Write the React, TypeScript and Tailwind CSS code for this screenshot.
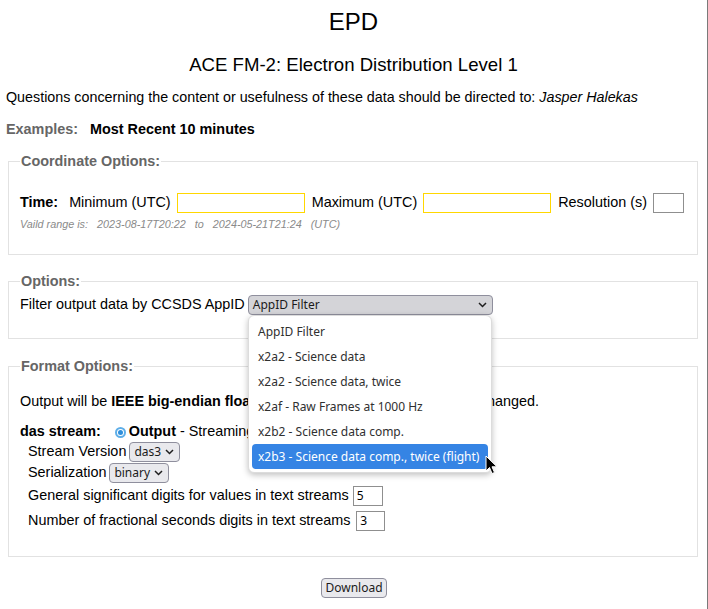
import React from 'react';

const ctl = "font-['Noto_Sans','DejaVu_Sans',sans-serif] text-[12px]";

const Chevron: React.FC = () => (
  <svg width="9" height="6" viewBox="0 0 9 6" className="shrink-0">
    <polyline points="1,1 4.5,4.5 8,1" fill="none" stroke="#1f1f1f" strokeWidth="1.5" />
  </svg>
);

const FakeSelect: React.FC<{ value: string; width: string; pressed?: boolean }> = ({ value, width, pressed }) => (
  <span
    className={`inline-flex h-[20px] items-center justify-between rounded-[4px] border border-[#8f8f9d] pl-[4px] pr-[5px] text-[#1b1b1b] ${ctl} ${width} ${pressed ? 'bg-[#d4d4d8]' : 'bg-[#e9e9ed]'}`}
  >
    <span className="leading-none">{value}</span>
    <Chevron />
  </span>
);

const TextBox: React.FC<{ width: string; value?: string; yellow?: boolean }> = ({ width, value, yellow }) => (
  <span
    className={`inline-flex h-[20px] items-center border pl-[3px] text-black ${ctl} ${width} ${yellow ? 'border-[#ffd700]' : 'border-[#8f8f8f]'}`}
  >
    {value}
  </span>
);

const Legend: React.FC<{ children: React.ReactNode }> = ({ children }) => (
  <legend className="px-[1px] leading-[18px] font-bold text-[#666666]">{children}</legend>
);

const appIds = [
  'AppID Filter',
  'x2a2 - Science data',
  'x2a2 - Science data, twice',
  'x2af - Raw Frames at 1000 Hz',
  'x2b2 - Science data comp.',
  'x2b3 - Science data comp., twice (flight)',
];

export default function App() {
  return (
    <div className="relative h-[609px] w-[708px] overflow-hidden border-r border-[#7a7a7a] bg-white font-['Liberation_Sans',Arial,sans-serif] text-[14.4px] text-black">
      {/* Headings */}
      <div className="flex h-[44px] items-center justify-center text-[24px]">EPD</div>
      <div className="flex h-[42px] items-center justify-center text-[18.6px]">
        ACE FM-2: Electron Distribution Level 1
      </div>
      <div className="flex h-[24px] items-center pl-[6px] text-[14.3px]">
        Questions concerning the content or usefulness of these data should be directed to:&nbsp;
        <i>Jasper Halekas</i>
      </div>
      <div className="flex h-[40px] items-center pl-[6px] font-bold">
        <span className="text-[#666666]">Examples:</span>
        <span className="ml-[12px]">Most Recent 10 minutes</span>
      </div>

      {/* Coordinate options */}
      <fieldset className="ml-[8px] mt-[2px] w-[690px] border border-[#e2e2e2] pl-[11px] pb-[22px]">
        <Legend>Coordinate Options:</Legend>
        <div className="mt-[23px] flex h-[20px] items-center">
          <span className="font-bold">Time:</span>
          <span className="ml-[11px]">Minimum (UTC)</span>
          <TextBox width="ml-[6px] w-[128px]" yellow />
          <span className="ml-[7px]">Maximum (UTC)</span>
          <TextBox width="ml-[6px] w-[128px]" yellow />
          <span className="ml-[7px]">Resolution (s)</span>
          <TextBox width="ml-[6px] w-[31px]" />
        </div>
        <div className="mt-[3px] flex h-[16px] items-center whitespace-pre text-[10.8px] italic text-[#8a8a8a]">
          {'Vaild range is:   2023-08-17T20:22   to   2024-05-21T21:24   (UTC)'}
        </div>
      </fieldset>

      {/* Options */}
      <fieldset className="ml-[8px] mt-[17px] w-[690px] border border-[#e2e2e2] pl-[11px] pb-[23px]">
        <Legend>Options:</Legend>
        <div className="mt-[5px] flex h-[20px] items-center">
          <span>Filter output data by CCSDS AppID</span>
          <FakeSelect value="AppID Filter" width="ml-[3px] w-[245px]" pressed />
        </div>
      </fieldset>

      {/* Format options */}
      <fieldset className="ml-[8px] mt-[18px] w-[690px] border border-[#e2e2e2] pl-[11px] pb-[25px]">
        <Legend>Format Options:</Legend>
        <div className="mt-[17px] flex h-[20px] items-center whitespace-nowrap">
          Output will be&nbsp;<b>IEEE big-endian floats</b>&nbsp;unless output format settings are changed.
        </div>
        <div className="mt-[10px] flex h-[20px] items-center whitespace-nowrap">
          <b>das stream:</b>
          <span className="ml-[14px] flex h-[11px] w-[11px] items-center justify-center rounded-full border-[2px] border-[#5eaee8] bg-white">
            <span className="h-[5px] w-[5px] rounded-full bg-[#2f8fdc]" />
          </span>
          <b className="ml-[3px]">Output</b>
          <span>&nbsp;- Streaming data in das format</span>
        </div>
        <div className="ml-[8px] flex h-[20px] items-center">
          <span>Stream Version</span>
          <FakeSelect value="das3" width="ml-[3px] w-[51px]" />
        </div>
        <div className="ml-[8px] mt-[1px] flex h-[20px] items-center">
          <span>Serialization</span>
          <FakeSelect value="binary" width="ml-[3px] w-[60px]" />
        </div>
        <div className="ml-[8px] mt-[3px] flex h-[20px] items-center">
          <span>General significant digits for values in text streams</span>
          <TextBox width="ml-[4px] w-[30px]" value="5" />
        </div>
        <div className="ml-[8px] mt-[5px] flex h-[20px] items-center">
          <span>Number of fractional seconds digits in text streams</span>
          <TextBox width="ml-[6px] w-[29px]" value="3" />
        </div>
      </fieldset>

      <div className="mt-[21px] flex justify-center">
        <span
          className={`ml-[1px] inline-flex h-[20px] items-center rounded-[4px] border border-[#8f8f9d] bg-[#e9e9ed] px-[3px] text-[#1b1b1b] ${ctl}`}
        >
          Download
        </span>
      </div>

      {/* Open AppID dropdown */}
      <div className="absolute left-[248px] top-[315px] w-[244px] rounded-[6px] border border-[#dcdcdc] bg-white p-[3px] shadow-[0_2px_6px_rgba(0,0,0,0.25)]">
        {appIds.map((label, i) => (
          <div
            key={label}
            className={`flex h-[25px] items-center rounded-[4px] pl-[6px] ${ctl} ${
              i === appIds.length - 1 ? 'bg-[#3584e4] text-white' : 'text-[#303030]'
            }`}
          >
            {label}
          </div>
        ))}
      </div>

      {/* Mouse pointer */}
      <svg className="absolute left-[485px] top-[455px]" width="13" height="20" viewBox="0 0 13 20">
        <path d="M1 1 L1 16 L4.5 12.5 L7 18.5 L9.5 17.5 L7 11.8 L12 11.8 Z" fill="#000" stroke="#fff" strokeWidth="1" strokeLinejoin="round" />
      </svg>
    </div>
  );
}
